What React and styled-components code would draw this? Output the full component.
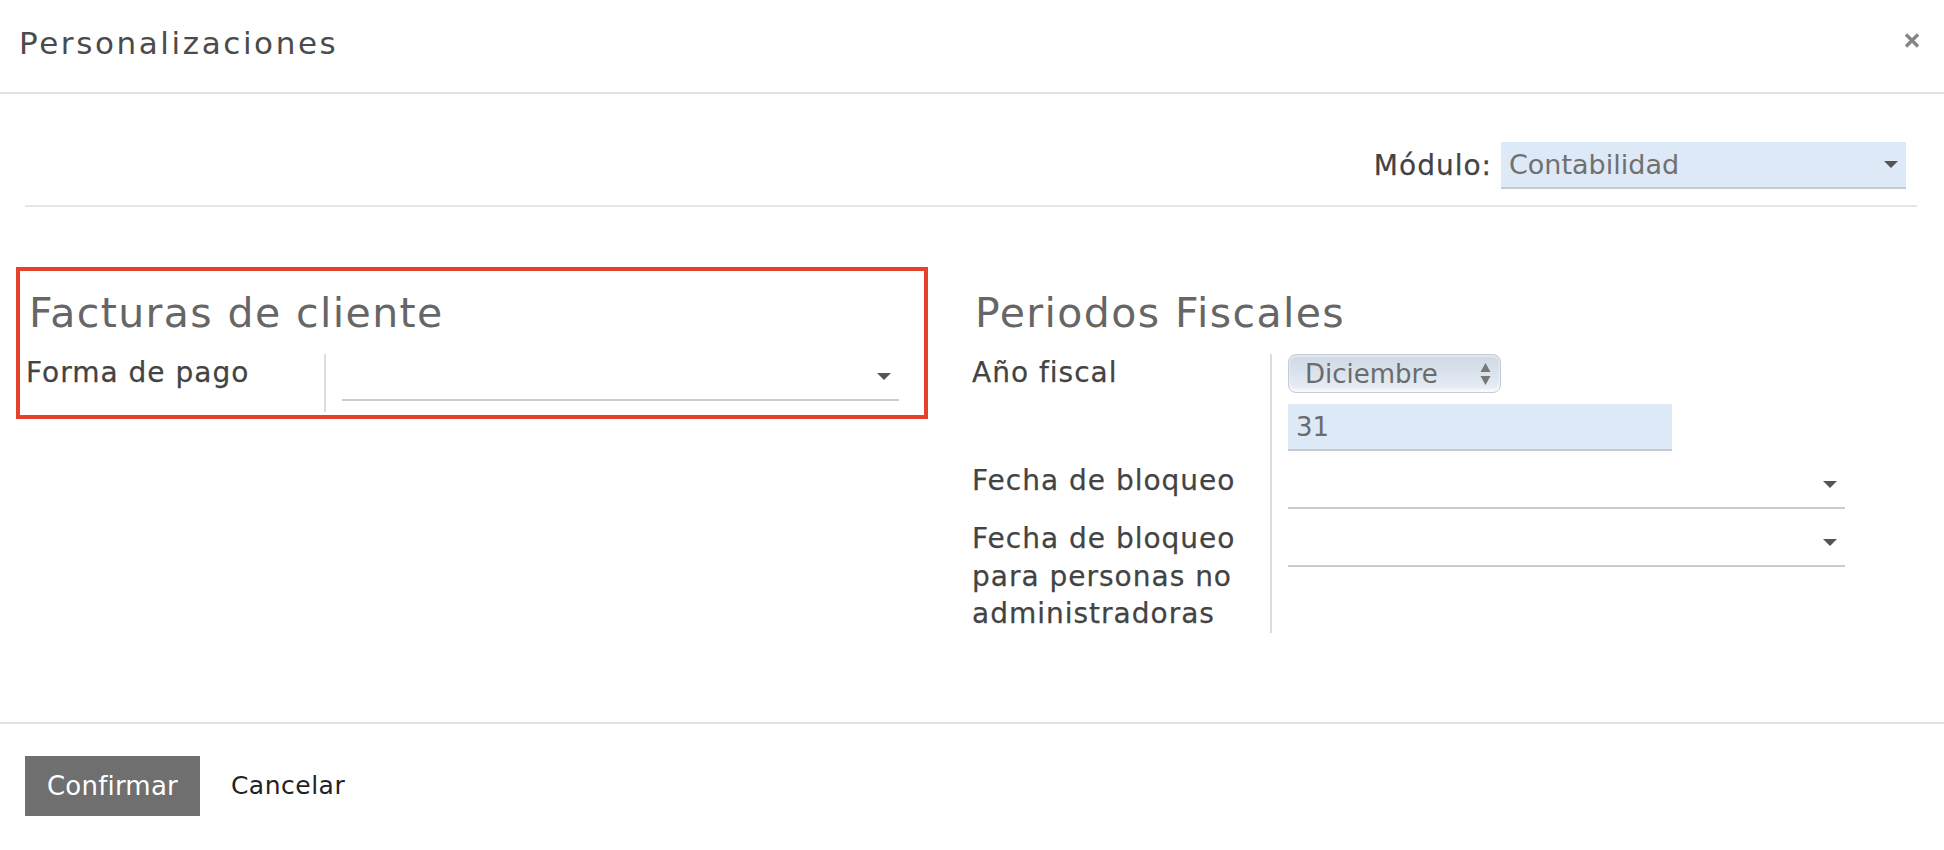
import React from "react";
import styled, { createGlobalStyle } from "styled-components";

const GlobalStyle = createGlobalStyle`
  html, body {
    margin: 0;
    padding: 0;
    background: #ffffff;
  }
  body {
    font-family: "DejaVu Sans", "Liberation Sans", sans-serif;
    color: #4a4a4a;
  }
`;

const Modal = styled.div`
  width: 1944px;
  height: 850px;
  background: #fff;
  display: flex;
  flex-direction: column;
`;

const Header = styled.header`
  display: flex;
  justify-content: space-between;
  align-items: flex-start;
  padding: 25px 24px 0 19px;
  box-sizing: border-box;
  height: 94px;
  border-bottom: 2px solid #dee2e6;
`;

const Title = styled.h4`
  margin: 0;
  font-size: 31px;
  line-height: 36px;
  font-weight: normal;
  letter-spacing: 2.6px;
  color: #4b4b4b;
`;

const Close = styled.button`
  margin-top: 8px;
  padding: 0;
  border: 0;
  background: none;
  width: 16px;
  height: 15px;
  display: flex;
  cursor: pointer;
`;

const Body = styled.main`
  padding: 48px 27px 82px 16px;
`;

const ModuleRow = styled.div`
  margin-left: 9px;
  display: flex;
  justify-content: flex-end;
  align-items: center;
  gap: 9px;
  padding: 0 11px 16px 0;
  border-bottom: 2px solid #e6e6e6;
`;

const Label = styled.label`
  font-size: 28px;
  line-height: 37.5px;
  letter-spacing: 1px;
  color: #434343;
  -webkit-text-stroke: 0.25px #434343;
`;

const Select = styled.div`
  box-sizing: border-box;
  width: ${p => p.$width || 557}px;
  height: 47px;
  display: flex;
  align-items: center;
  justify-content: space-between;
  padding: 0 8px;
  background: ${p => (p.$filled ? "#dde9f6" : "transparent")};
  border-bottom: 2px solid ${p => (p.$filled ? "#c6c9cd" : "#cccccc")};
  font-size: 27px;
  color: #707070;
`;

const Caret = styled.span`
  width: 0;
  height: 0;
  border-left: 7px solid transparent;
  border-right: 7px solid transparent;
  border-top: 7px solid #555;
  margin-left: auto;
`;

const Columns = styled.div`
  margin-top: 60px;
  display: grid;
  grid-template-columns: 912px 1fr;
  column-gap: 34px;
  align-items: start;
`;

const Section = styled.section`
  border: 4px solid ${p => (p.$highlight ? "#e5412b" : "transparent")};
  padding: 18px 6px 3px;
`;

const Heading = styled.h2`
  margin: 0 0 17px;
  padding-left: 3px;
  font-size: 41px;
  line-height: 48px;
  font-weight: normal;
  letter-spacing: 1.4px;
  color: #666666;
`;

const Row = styled.div`
  display: grid;
  grid-template-columns: 300px auto;
  justify-content: start;
`;

const LabelCell = styled.div`
  box-sizing: border-box;
  border-right: 2px solid #dcdcdc;
  padding-right: 10px;
  padding-bottom: ${p => (p.$last ? 0 : 11)}px;
  display: flex;
`;

const FieldCell = styled.div`
  padding-left: 16px;
  padding-bottom: ${p => (p.$last ? 0 : 11)}px;
  display: flex;
  flex-direction: column;
  align-items: flex-start;
  gap: 11px;
`;

const MonthSelect = styled.div`
  box-sizing: border-box;
  width: 213px;
  height: 39px;
  border-radius: 8px;
  border: 1px solid #c3ccd7;
  background: linear-gradient(#cfd8e3, #dce4ee 55%, #e9eff6);
  box-shadow: inset 0 -3px 3px rgba(255, 255, 255, 0.7), inset 0 2px 2px rgba(255, 255, 255, 0.4);
  display: flex;
  align-items: center;
  justify-content: space-between;
  padding: 0 9px 0 16px;
  font-size: 26px;
  color: #6b6b6b;
`;

const Input = styled.div`
  box-sizing: border-box;
  width: 384px;
  height: 47px;
  background: #dde9f6;
  border-bottom: 2px solid #c6c9cd;
  padding: 0 8px;
  display: flex;
  align-items: center;
  font-size: 26px;
  color: #6b6b6b;
`;

const Footer = styled.footer`
  border-top: 2px solid #dee2e6;
  padding: 32px 25px 0;
  display: flex;
  align-items: center;
  gap: 31px;
`;

const Button = styled.button`
  height: 60px;
  padding: 0 ${p => (p.$primary ? 22 : 0)}px;
  border: 0;
  border-radius: 0;
  background: ${p => (p.$primary ? "#6f6f6f" : "transparent")};
  color: ${p => (p.$primary ? "#ffffff" : "#1f2326")};
  font-family: "DejaVu Sans", "Liberation Sans", sans-serif;
  font-size: ${p => (p.$primary ? 26 : 25)}px;
  letter-spacing: ${p => (p.$primary ? 0.2 : 0.5)}px;
  cursor: pointer;
`;

function CloseIcon() {
  return (
    <svg width="16" height="15" viewBox="0 0 16 15">
      <path d="M2 1.5 L14 13.5 M14 1.5 L2 13.5" stroke="#858585" strokeWidth="3.4" />
    </svg>
  );
}

function UpDown() {
  return (
    <svg width="11" height="24" viewBox="0 0 11 24">
      <path d="M5.5 1 L10.5 10 L0.5 10 Z" fill="#777" />
      <path d="M0.5 14 L10.5 14 L5.5 23 Z" fill="#777" />
    </svg>
  );
}

function FormRow({ label, last, children }) {
  return (
    <Row>
      <LabelCell $last={last}>
        <Label>{label}</Label>
      </LabelCell>
      <FieldCell $last={last}>{children}</FieldCell>
    </Row>
  );
}

export default function App() {
  return (
    <Modal>
      <GlobalStyle />
      <Header>
        <Title>Personalizaciones</Title>
        <Close aria-label="Cerrar">
          <CloseIcon />
        </Close>
      </Header>

      <Body>
        <ModuleRow>
          <Label>Módulo:</Label>
          <Select $filled $width={405}>
            Contabilidad
            <Caret />
          </Select>
        </ModuleRow>

        <Columns>
          <Section $highlight>
            <Heading>Facturas de cliente</Heading>
            <FormRow label="Forma de pago">
              <Select>
                <Caret />
              </Select>
            </FormRow>
          </Section>

          <Section>
            <Heading>Periodos Fiscales</Heading>
            <FormRow label="Año fiscal">
              <MonthSelect>
                Diciembre
                <UpDown />
              </MonthSelect>
              <Input>31</Input>
            </FormRow>
            <FormRow label="Fecha de bloqueo">
              <Select>
                <Caret />
              </Select>
            </FormRow>
            <FormRow label="Fecha de bloqueo para personas no administradoras" last>
              <Select>
                <Caret />
              </Select>
            </FormRow>
          </Section>
        </Columns>
      </Body>

      <Footer>
        <Button $primary>Confirmar</Button>
        <Button>Cancelar</Button>
      </Footer>
    </Modal>
  );
}
